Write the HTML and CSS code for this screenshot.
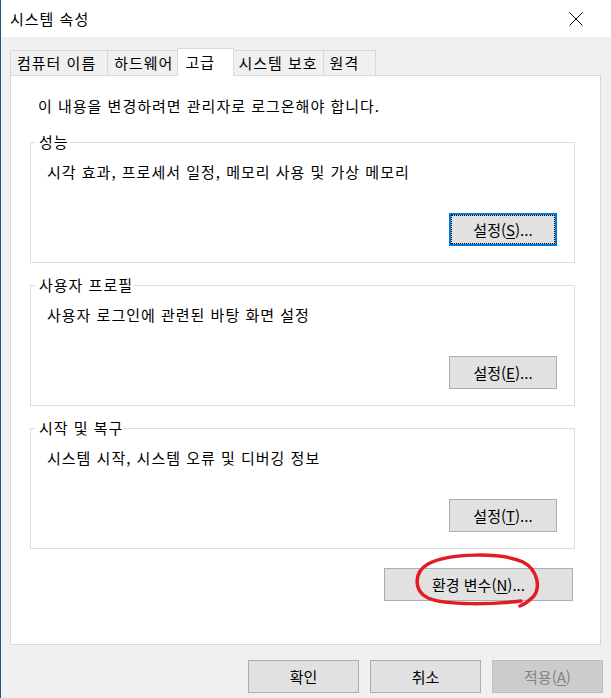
FILE: index.html
```html
<!DOCTYPE html>
<html lang="ko">
<head>
<meta charset="utf-8">
<title>시스템 속성</title>
<link rel="stylesheet" href="styles.css">
</head>
<body>
<div class="window">
  <div class="titlebar">
    <span class="title">시스템 속성</span>
    <svg class="close" width="14" height="14" viewBox="0 0 14 14"><path d="M0.5 0.5 L13.5 13.5 M13.5 0.5 L0.5 13.5" stroke="#000" stroke-width="1" fill="none"/></svg>
  </div>
  <div class="main">
    <div class="tabs">
      <div class="tab tab-first">컴퓨터 이름</div>
      <div class="tab">하드웨어</div>
      <div class="tab tab-active">고급</div>
      <div class="tab">시스템 보호</div>
      <div class="tab">원격</div>
    </div>
    <div class="panel">
      <p class="info">이 내용을 변경하려면 관리자로 로그온해야 합니다.</p>
      <fieldset class="group">
        <legend>성능</legend>
        <div class="group-body">
          <p class="desc">시각 효과, 프로세서 일정, 메모리 사용 및 가상 메모리</p>
          <button class="btn btn-set btn-focus">설정(<u>S</u>)...</button>
        </div>
      </fieldset>
      <fieldset class="group">
        <legend>사용자 프로필</legend>
        <div class="group-body">
          <p class="desc">사용자 로그인에 관련된 바탕 화면 설정</p>
          <button class="btn btn-set">설정(<u>E</u>)...</button>
        </div>
      </fieldset>
      <fieldset class="group">
        <legend>시작 및 복구</legend>
        <div class="group-body">
          <p class="desc">시스템 시작, 시스템 오류 및 디버깅 정보</p>
          <button class="btn btn-set">설정(<u>T</u>)...</button>
        </div>
      </fieldset>
      <div class="env-row">
        <button class="btn btn-env">환경 변수(<u>N</u>)...</button>
      </div>
    </div>
    <div class="footer">
      <button class="btn btn-dlg">확인</button>
      <button class="btn btn-dlg">취소</button>
      <button class="btn btn-dlg btn-disabled" disabled>적용(<u>A</u>)</button>
    </div>
  </div>
  <svg class="annotation" width="150" height="62" viewBox="405 552 150 62">
    <path d="M520 601 C495 604 445 606 427 598 C412 591 413 572 427 564 C448 553 500 552 522 562 C537 570 540 588 532 597 C528 601 524 604 519 606" fill="none" stroke="#e31b23" stroke-width="3.5" stroke-linecap="round" stroke-linejoin="round"/>
  </svg>
</div>
</body>
</html>
```

FILE: styles.css
```css
* { box-sizing: border-box; }

html, body {
  margin: 0;
  padding: 0;
}

body {
  background: #f0f0f0;
  font-family: "Noto Sans CJK KR", "Noto Sans", sans-serif;
  font-size: 15px;
  letter-spacing: 1px;
  color: #000;
}

.window {
  position: relative;
  width: 611px;
  height: 698px;
  border-left: 1px solid #1b5a7e;
  background: #f0f0f0;
  overflow: hidden;
}

.titlebar {
  height: 37px;
  background: #fff;
  display: flex;
  align-items: center;
  justify-content: space-between;
  padding: 0 28px 0 9px;
}

.title {
  line-height: 20px;
}

.close {
  display: block;
}

.main {
  padding: 11px 10px 0 9px;
}

.tabs {
  display: flex;
  align-items: flex-end;
  height: 28px;
  margin-bottom: -1px;
  position: relative;
  z-index: 1;
}

.tab {
  height: 25px;
  margin-bottom: 1px;
  margin-left: -1px;
  min-width: 53px;
  padding: 0 5px 0 6px;
  border: 1px solid #d9d9d9;
  border-bottom: none;
  background: #f0f0f0;
  line-height: 23px;
  white-space: nowrap;
}

.tab-first {
  margin-left: 0;
  padding: 0 11px 0 6px;
}

.tab-active {
  height: 28px;
  margin: 0 -2px 0 -2px;
  min-width: 57px;
  padding: 0 16px 0 7px;
  background: #fff;
  line-height: 25px;
  position: relative;
  z-index: 2;
}

.panel {
  height: 570px;
  background: #fff;
  border: 1px solid #d9d9d9;
  padding: 20px 25px 0 19px;
}

.info {
  margin: 0 0 16px 8px;
  line-height: 20px;
}

.group {
  margin: 0 0 12px 0;
  padding: 0;
  border: 1px solid #dcdcdc;
  min-width: 0;
}

.group legend {
  margin-left: 4px;
  padding: 0 1px 0 4px;
  line-height: 20px;
}

.group-body {
  display: flex;
  flex-direction: column;
  align-items: flex-end;
  padding: 10px 17px 16px 16px;
}

.desc {
  align-self: stretch;
  margin: 0;
  line-height: 20px;
}

.btn {
  font-family: inherit;
  font-size: 15px;
  letter-spacing: 0;
  color: #000;
  height: 33px;
  background: #e1e1e1;
  border: 1px solid #adadad;
  border-radius: 0;
  padding: 0;
  line-height: 20px;
  text-align: center;
}

.btn u {
  text-underline-offset: 2px;
}

.btn-set {
  width: 108px;
  margin-top: 31px;
}

.btn-focus {
  border: 2px solid #0078d7;
  outline: 1px dotted #000;
  outline-offset: -3px;
}

.env-row {
  display: flex;
  justify-content: flex-end;
  margin-top: 19px;
  padding-right: 2px;
}

.btn-env {
  width: 189px;
}

.footer {
  display: flex;
  justify-content: flex-end;
  gap: 11px;
  padding-top: 15px;
  margin-right: -2px;
}

.btn-dlg {
  width: 111px;
}

.btn-disabled {
  background: #cccccc;
  border-color: #bfbfbf;
  color: #838383;
}

.annotation {
  position: absolute;
  left: 405px;
  top: 552px;
}
```
